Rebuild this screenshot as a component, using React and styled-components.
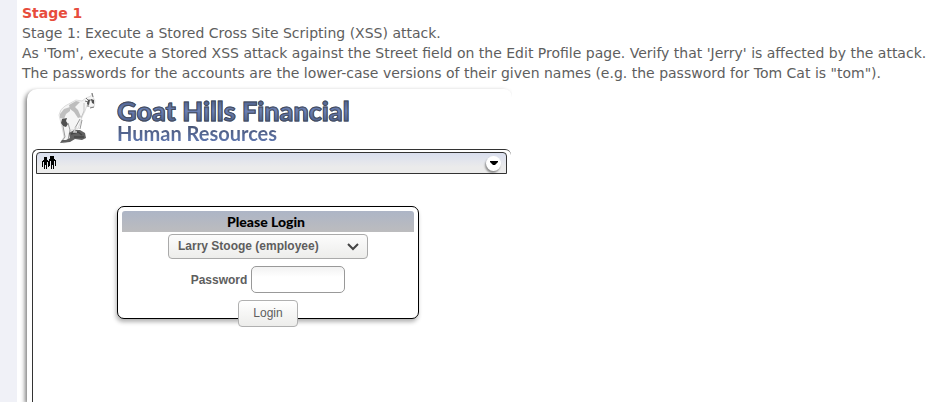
import React, { useState } from "react";
import styled, { createGlobalStyle } from "styled-components";

function GoatLogo() {
  return (
    <svg width="40" height="52" viewBox="0 0 40 52" role="img" aria-label="Goat">
      <path
        d="M1 22 Q2 16 7 13 L18 7 L24 8 L28 5 L33 3 L34 0 L35 4 L37 8 L36 14 L32 14 L29 12 L27 18 L24 24 L23 28 L20 36 L13 37 L11 48 L6 50 L3 49 L6 44 L4 34 Z"
        fill="#f5f5f5"
        stroke="#cacaca"
        strokeWidth="0.6"
      />
      <path d="M2 21 L6 16 L12 14 L12 18 L8 21 L6 26 L2 25 Z" fill="#c0c0c0" />
      <path d="M11 12 L18 8 L22 9 L17 14 L20 17 L23 24 L20 25 L16 19 L12 16 Z" fill="#bdbdbd" />
      <path d="M4 26 L9 25 L8 28 L10 31 L8 34 L5 33 L3 30 Z" fill="#505050" />
      <path d="M5 33 L7 44 L4 48 M10 30 L12 37 L10 47 M22 26 L17 35 M24 27 L22 36" fill="none" stroke="#9a9a9a" />
      <path d="M26 10 L26 18 L23 25" fill="none" stroke="#c4c4c4" />
      <path d="M28 5 L30 7 L34 7 M34 0 L35 4 M27 8 L30 9 L30 14 M32 15 L36 14" fill="none" stroke="#777" />
      <path d="M30 7 L32 7 L31 12 L29 11 Z M33 6 L36 7 L36 11 L34 10 Z" fill="#505050" />
      <path d="M11 40 L16 37 L22 37 L27 40 L28 45 L24 47 L17 46 L12 49 L2 50 L4 47 L8 47 L12 45 Z" fill="#606060" />
      <path d="M13 41 L20 39 L24 42 M16 44 L26 44" fill="none" stroke="#444" strokeWidth="1.5" />
      <path d="M18 34 L16 39 L19 39" fill="none" stroke="#ccc" strokeWidth="1.5" />
    </svg>
  );
}

function PeopleIcon() {
  return (
    <svg width="14" height="14" viewBox="0 0 14 14" shapeRendering="crispEdges" aria-hidden="true">
      <path d="M2 1h3v3h-3z M1 4h5v1h1v6h-1v-5h-1v7h-1v-4h-1v4h-1v-7h-1v5h-1v-6h1z" />
      <path d="M8 0h4v3h-4z M7 3h6v1h1v6h-1v-5h-1v8h-1v-4h-1v4h-1v-8h-1v5h-1z" />
    </svg>
  );
}

function LoginForm() {
  const [employee, setEmployee] = useState("larry");
  const [password, setPassword] = useState("");

  return (
    <LoginBox onSubmit={(e) => e.preventDefault()}>
      <LoginTitle>Please Login</LoginTitle>
      <SelectWrap>
        <EmployeeSelect
          aria-label="Employee"
          value={employee}
          onChange={(e) => setEmployee(e.target.value)}
        >
          <option value="larry">Larry Stooge (employee)</option>
        </EmployeeSelect>
        <svg width="12" height="8" viewBox="0 0 12 8" aria-hidden="true">
          <path d="M1 1 L6 6 L11 1" fill="none" stroke="#444" strokeWidth="2" />
        </svg>
      </SelectWrap>
      <PasswordRow>
        <label htmlFor="password">Password</label>
        <PasswordInput
          id="password"
          type="password"
          value={password}
          onChange={(e) => setPassword(e.target.value)}
        />
      </PasswordRow>
      <LoginButton type="submit">Login</LoginButton>
    </LoginBox>
  );
}

function App() {
  return (
    <Page>
      <GlobalStyle />
      <Lesson>
        <Instructions>
          <h1>Stage 1</h1>
          <p>Stage 1: Execute a Stored Cross Site Scripting (XSS) attack.</p>
          <p>
            As 'Tom', execute a Stored XSS attack against the Street field on
            the Edit Profile page. Verify that 'Jerry' is affected by the
            attack.
          </p>
          <p>
            The passwords for the accounts are the lower-case versions of their
            given names (e.g. the password for Tom Cat is "tom").
          </p>
        </Instructions>
        <PanelClip>
          <Panel>
            <Brand>
              <GoatLogo />
              <div>
                <Company>Goat Hills Financial</Company>
                <Department>Human Resources</Department>
              </div>
            </Brand>
            <Frame>
              <Toolbar>
                <PeopleIcon />
                <MenuButton type="button" aria-label="Menu">
                  <svg width="8" height="5" viewBox="0 0 8 5" aria-hidden="true">
                    <path d="M0 0h8v1L5 4H3L0 1z" />
                  </svg>
                </MenuButton>
              </Toolbar>
              <LoginForm />
            </Frame>
          </Panel>
        </PanelClip>
      </Lesson>
    </Page>
  );
}

export default App;

const GlobalStyle = createGlobalStyle`
  * {
    box-sizing: border-box;
  }
  body {
    margin: 0;
    background: #f0f1f7;
  }
`;
const Page = styled.div`
  min-height: 100vh;
  display: flex;
  padding-left: 17px;
  color: #5e5e5e;
  font-family: "DejaVu Sans", sans-serif;
  font-size: 14px;
  line-height: 20px;
`;
const Lesson = styled.main`
  flex: 1;
  min-width: 0;
  display: flex;
  flex-direction: column;
  background: #fff;
`;
const Instructions = styled.section`
  padding: 3px 0 0 5px;
  h1 {
    margin: 0;
    color: #e74c3c;
    font-size: 14px;
    font-weight: 700;
  }
  p {
    margin: 0;
  }
`;
/* clips the panel shadow on the right side */
const PanelClip = styled.div`
  flex: 1;
  display: flex;
  max-width: 495px;
  padding: 6px 0 0 10px;
  overflow: hidden;
`;
const Panel = styled.div`
  flex: 1;
  display: flex;
  flex-direction: column;
  padding-left: 5px;
  border-radius: 10px 8px 0 0;
  background: #fff;
  box-shadow: -2px 2px 4px rgba(0, 0, 0, 0.5);
`;
const Brand = styled.header`
  display: flex;
  height: 60px;
  padding: 4px 0 0 26px;
  > div {
    padding: 5px 0 0 19px;
  }
`;
const Company = styled.div`
  width: max-content;
  font: 900 27px/26px Lato, sans-serif;
  color: transparent;
  background: linear-gradient(#465a86, #6c80b4 50%, #465a86);
  background-clip: text;
  -webkit-text-stroke: 1px #434b5c;
`;
const Department = styled.div`
  width: max-content;
  font: 700 20px/18px Lato, sans-serif;
  color: transparent;
  background: linear-gradient(#46516e, #6078b0);
  background-clip: text;
`;
const Frame = styled.div`
  flex: 1;
  margin-right: 1px;
  padding: 2px 4px 0 3px;
  border: 1px solid #333;
  border-width: 1px 0 0 1px;
  border-radius: 6px 6px 0 0;
`;
const Toolbar = styled.nav`
  display: flex;
  align-items: center;
  justify-content: space-between;
  height: 22px;
  padding: 0 5px;
  border: 1px solid #333;
  border-radius: 4px 4px 0 0;
  background: linear-gradient(#d9deee, #ebebeb 70%);
`;
const MenuButton = styled.button`
  display: grid;
  place-items: center;
  width: 15px;
  height: 15px;
  padding: 0;
  border: 0;
  border-radius: 50%;
  background: #fff;
  box-shadow: -1px 2px 2px rgba(0, 0, 0, 0.4);
`;
const LoginBox = styled.form`
  display: flex;
  flex-direction: column;
  align-items: center;
  width: 302px;
  height: 113px;
  margin: 32px 0 0 81px;
  padding: 4px;
  border: 1px solid #000;
  border-radius: 7px;
  background: #fff;
  box-shadow: -1px 3px 4px rgba(0, 0, 0, 0.3);
  color: #5e5e5e;
  font: 700 12px/16px "Liberation Sans", sans-serif;
`;
const LoginTitle = styled.h2`
  flex: none;
  width: 100%;
  margin: 0;
  padding-right: 4px;
  border-radius: 3px 3px 0 0;
  background: linear-gradient(#adb5c6, #bcbcbe);
  color: #000;
  font: 900 14px/21px Lato, sans-serif;
  text-align: center;
`;
const SelectWrap = styled.div`
  display: grid;
  align-items: center;
  margin-top: 2px;
  > * {
    grid-area: 1 / 1;
  }
  > svg {
    justify-self: end;
    margin-right: 9px;
    pointer-events: none;
  }
`;
const EmployeeSelect = styled.select`
  appearance: none;
  width: 200px;
  height: 25px;
  padding: 0 9px 2px;
  border: 1px solid #aaa;
  border-radius: 4px;
  background: linear-gradient(#fcfcfc, #ededeb);
  color: inherit;
  font: inherit;
`;
const PasswordRow = styled.div`
  display: flex;
  align-items: center;
  gap: 4px;
  margin-top: 7px;
`;
const PasswordInput = styled.input`
  width: 94px;
  height: 27px;
  padding: 0 8px;
  border: 1px solid #999;
  border-radius: 5px;
  background: linear-gradient(#f2f2f2, #fff 40%);
`;
const LoginButton = styled.button`
  flex: none;
  width: 60px;
  height: 27px;
  margin-top: 7px;
  padding: 0 0 2px;
  border: 1px solid #b0b0b0;
  border-radius: 4px;
  background: linear-gradient(#fff, #ededeb);
  color: #5e5e5e;
  font: 12px "Liberation Sans", sans-serif;
`;
